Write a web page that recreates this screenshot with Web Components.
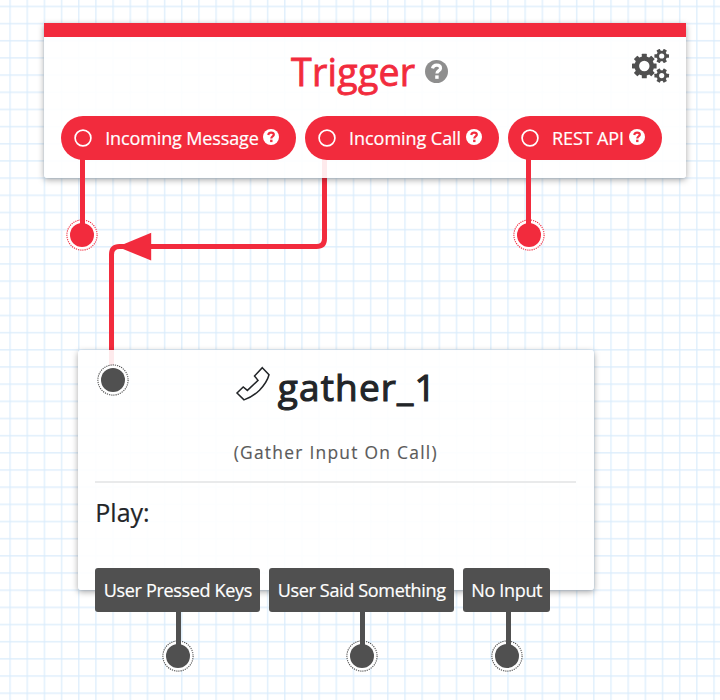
<!DOCTYPE html>
<html lang="en"><head><meta charset="utf-8"><title>Flow editor</title>
<style>html,body{margin:0;width:720px;height:700px;overflow:hidden}body{font-family:"Open Sans","Noto Sans",sans-serif}</style></head>
<body>
<flow-canvas>
  <flow-wire></flow-wire>
  <trigger-card>
    Trigger
    <trigger-event slot="events" style="--w:235px;--ls:-.13px">Incoming Message</trigger-event>
    <trigger-event slot="events" style="--w:194px;--ls:-.05px">Incoming Call</trigger-event>
    <trigger-event slot="events" style="--w:154.5px;--ls:-.1px">REST API</trigger-event>
  </trigger-card>
  <widget-card>
    gather_1
    <span slot="kind">(Gather Input On Call)</span>
    <span slot="detail">Play:</span>
    <flow-outcome slot="outcomes" style="--w:165px">User Pressed Keys</flow-outcome>
    <flow-outcome slot="outcomes" style="--w:185.5px">User Said Something</flow-outcome>
    <flow-outcome slot="outcomes" style="--w:87.5px">No Input</flow-outcome>
  </widget-card>
  <flow-port style="left:82.2px;top:235px;--stem:70px;--c:#f22b3d"></flow-port>
  <flow-port style="left:528.8px;top:235px;--stem:70px;--c:#f22b3d"></flow-port>
  <flow-port style="left:113px;top:379.5px;--stem:0px"></flow-port>
  <flow-port style="left:178.4px;top:656px;--stem:39px"></flow-port>
  <flow-port style="left:362.3px;top:656px;--stem:39px"></flow-port>
  <flow-port style="left:506.5px;top:656px;--stem:39px;--dx:1.5px"></flow-port>
</flow-canvas>
<script>
function define(name, html){
  customElements.define(name, class extends HTMLElement{
    constructor(){ super(); this.attachShadow({mode:'open'}).innerHTML = html; }
  });
}
define('help-icon', `<style>:host{display:block;width:16px;height:16px;color:#fff;--q:#f22b3d}svg{display:block;width:100%;height:100%}</style>
<svg viewBox="0 0 16 16"><circle cx="8" cy="8" r="8" fill="currentColor"/><path d="M5.2 5.9C5.6 4.3 6.7 3.6 8.1 3.6c1.6 0 2.7.8 2.7 2.1 0 1.7-2.5 1.7-2.5 3.7" fill="none" stroke="var(--q)" stroke-width="2.2"/><rect x="7.1" y="10.7" width="2.4" height="2.4" fill="var(--q)"/></svg>`);

define('flow-canvas', `<style>:host{display:block;position:relative;width:720px;height:700px;overflow:hidden;background:#fff}.grid{position:absolute;inset:0;width:100%;height:100%}</style>
<svg class="grid"><defs><pattern id="g" x="9.3" y="5.6" width="17.17" height="17.17" patternUnits="userSpaceOnUse"><path d="M.8 0V17.17M0 .8H17.17" stroke="#d9ecfc" stroke-width="1.15"/></pattern></defs><rect width="720" height="700" fill="url(#g)"/></svg><slot></slot>`);

define('flow-wire', `<style>:host{position:absolute;inset:0}svg{display:block}</style>
<svg width="720" height="700"><path d="M324.5 160V238.5Q324.5 246.5 316.5 246.5H119.5Q111.5 246.5 111.5 254.5V368" fill="none" stroke="#f22b3d" stroke-width="5"/><path d="M117.5 246.7L151.2 232.8V260.6Z" fill="#f22b3d"/></svg>`);

define('trigger-event', `<style>:host{display:flex;align-items:center;box-sizing:border-box;width:var(--w);height:44.5px;border-radius:22.25px;background:#f22b3d;color:#fff;padding:0 17px 0 13.2px;font-size:18px;letter-spacing:var(--ls);-webkit-text-stroke:.2px}.ring{width:18px;height:18px;flex:none}.label{margin-left:13px;white-space:nowrap;padding-top:1px}help-icon{margin-left:auto;margin-bottom:2px;flex:none}</style><svg class="ring" viewBox="0 0 18 18"><circle cx="9" cy="9" r="7.9" fill="none" stroke="#fff" stroke-width="1.7"/></svg><span class="label"><slot></slot></span><help-icon></help-icon>`);

const teeth=(n,r,w,h,s)=>Array.from({length:n},(_,i)=>`<rect x="${-w/2}" y="${-r}" width="${w}" height="${h}" rx=".5" transform="rotate(${s+i*360/n})"/>`).join('');
const gear=(x,y,n,r,w,b,hole,s=0)=>`<g transform="translate(${x} ${y})" fill="#505050">${teeth(n,r,w,r-b+2,s)}<circle r="${(b+hole)/2}" fill="none" stroke="#505050" stroke-width="${b-hole}"/></g>`;
define('gears-icon', `<style>:host{display:block}svg{display:block}</style><svg width="38" height="34" viewBox="0 0 38 34">${gear(12.3,17,8,12.3,5,9.8,5.2)}${gear(29.7,7,6,7.3,3.7,5.3,2.6,30)}${gear(29.7,26.6,6,7.3,3.7,5.3,2.6,30)}</svg>`);

define('trigger-card', `<style>:host{position:absolute;left:43.5px;top:23px;width:642.5px;height:155px;box-sizing:border-box;border-radius:0 0 3px 3px;background:rgba(255,255,255,.9);box-shadow:0 2px 6px rgba(0,0,0,.34);display:flex;flex-direction:column}
.bar{height:13.5px;flex:none;background:#f22b3d}
header{height:79px;flex:none;display:grid;grid-template-columns:1fr auto 1fr;padding:0 16px 0 17px;align-items:start}
h1{grid-column:2;margin:9px 0 0 9px;display:flex;align-items:center;gap:10px;color:#f22b3d;font-weight:400;font-size:37.5px;line-height:52px;letter-spacing:.25px;-webkit-text-stroke:.8px}
h1 help-icon{width:23px;height:23px;color:#8e8e8e;--q:#fff}gears-icon{justify-self:end;margin-top:12.3px}
.events{display:flex;gap:8.9px;padding-left:17.5px}</style>
<div class="bar"></div><header><h1><span><slot></slot></span><help-icon></help-icon></h1><gears-icon></gears-icon></header><div class="events"><slot name="events"></slot></div>`);

define('phone-icon', `<style>:host{display:block}svg{display:block}</style><svg width="36" height="36" viewBox="0 0 36 36"><path d="M27.3 1.7L34 8.7Q32.2 16 24.5 24.2Q17.5 31 9 33.9L2 27L8.2 20.9L12.4 24.4L23 14.4L19.5 10Z" fill="none" stroke="#222528" stroke-width="1.5"/></svg>`);

define('widget-card', `<style>:host{position:absolute;left:78px;top:349.5px;width:515.5px;height:240.5px;border-radius:3px;background:rgba(255,255,255,.9);box-shadow:0 2px 6px rgba(0,0,0,.34);display:flex;flex-direction:column;box-sizing:border-box;padding:0 17.3px;color:#222528}
h2{margin:11px 0 0;display:flex;justify-content:center;align-items:center;gap:7px;font-weight:400;font-size:37px;line-height:52px;height:52px;letter-spacing:1.15px;-webkit-text-stroke:1.1px}phone-icon{margin-top:-5px}
.kind{margin-top:26px;text-align:center;font-size:17.4px;line-height:26px;letter-spacing:1.26px;color:#5a5a5a;height:26px;-webkit-text-stroke:.15px}
.rule{height:2px;flex:none;background:#e9eaeb;margin-top:16.5px}
.detail{font-size:25px;line-height:34px;height:34px;margin-top:12px;-webkit-text-stroke:.2px}
.out{display:flex;gap:8.6px;margin-top:38.5px;width:max-content}</style>
<h2><phone-icon></phone-icon><span><slot></slot></span></h2><div class="kind"><slot name="kind"></slot></div><div class="rule"></div><div class="detail"><slot name="detail"></slot></div><div class="out"><slot name="outcomes"></slot></div>`);

define('flow-outcome', `<style>:host{display:flex;align-items:center;justify-content:center;box-sizing:border-box;width:var(--w);height:44.5px;border-radius:3px;background:#505050;color:#fff;font-size:18px;letter-spacing:-.33px;white-space:nowrap;padding-top:1px;-webkit-text-stroke:.2px}</style><slot></slot>`);

define('flow-port', `<style>:host{position:absolute;width:0;height:0;color:var(--c,#505050)}svg{position:absolute;left:-16px;top:-16px}b{position:absolute;left:calc(-2.5px + var(--dx,0px));bottom:6px;width:5px;height:var(--stem);background:currentColor}</style>
<svg width="32" height="32"><circle cx="16" cy="16" r="15.1" fill="#fff" stroke="currentColor" stroke-width="1.1" stroke-dasharray="1.2 1"/><circle cx="16" cy="16" r="12" fill="currentColor"/></svg><b></b>`);
</script>
</body></html>
